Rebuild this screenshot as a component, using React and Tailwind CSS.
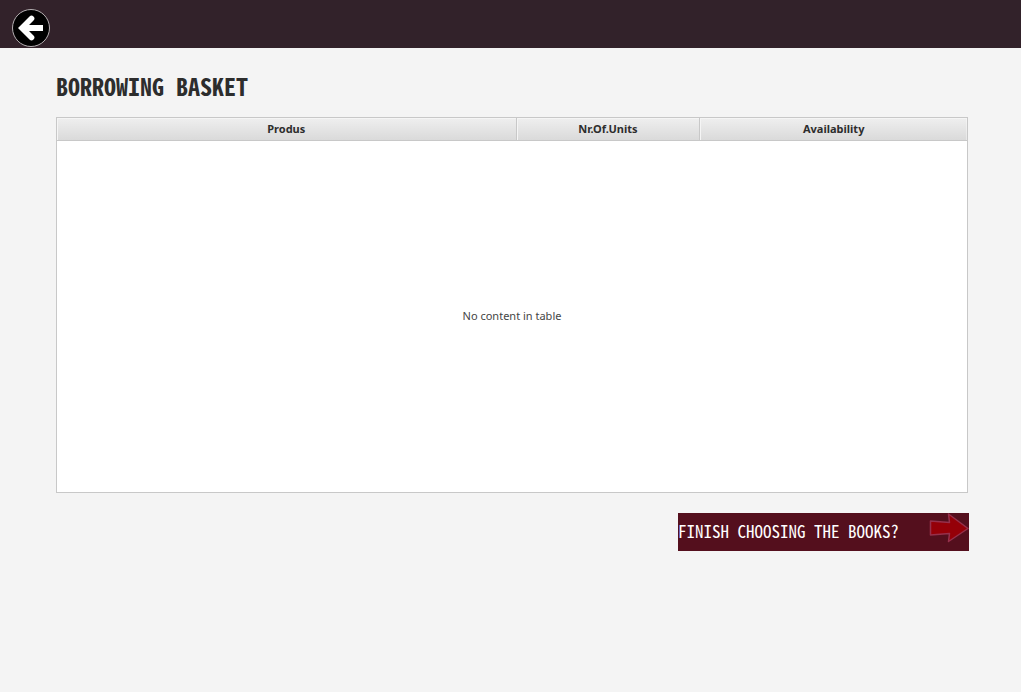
function BackIcon() {
  return (
    <svg viewBox="0 0 38 38" className="size-full" aria-hidden="true">
      <circle cx="19" cy="19" r="18.5" fill="#000" stroke="#b5b0b2" strokeWidth="1" />
      <path
        d="M6 19L17.500 7.500Q19.500 5.500 21.500 7.500Q23.500 9.500 21.500 11.500L17 16H31V22H17L21.500 26.500Q23.500 28.500 21.500 30.500Q19.500 32.500 17.500 30.500Z"
        fill="#fff"
      />
    </svg>
  );
}

function ArrowIcon() {
  return (
    <svg viewBox="0 0 40 30" className="h-[30px] w-10 shrink-0" aria-hidden="true">
      <path
        d="M1.500 8L20.500 9.500L19.500 1L39 15.500L19.500 28.500L20.500 20.500L1.500 22Z"
        fill="#950008"
        stroke="#96304b"
        strokeWidth="1.5"
        strokeLinejoin="round"
      />
    </svg>
  );
}

const headerCell =
  "h-[23px] border-b border-[#c8c8c8] p-0 text-center text-[11px] leading-4 font-bold shadow-[inset_1px_1px_0_#f5f5f5]";

export default function App() {
  return (
    <div className="min-h-screen bg-[#f4f4f4] font-['Noto_Sans','Open_Sans',sans-serif] text-[#2d2d2d]">
      <header className="flex h-12 items-end bg-[#32222a] pb-px pl-3">
        <button type="button" aria-label="Back" className="size-[38px] rounded-full">
          <BackIcon />
        </button>
      </header>

      <main className="flex flex-col pt-5 pr-[52px] pl-14">
        <h1 className="font-['Agency_FB','Noto_Sans_Mono_CJK_SC','Noto_Sans_CJK_SC',sans-serif] text-[24px] leading-9 font-bold whitespace-nowrap">
          BORROWING BASKET
        </h1>

        <table className="mt-[13px] mr-px h-[376px] table-fixed border-separate border-spacing-0 border border-[#c8c8c8] bg-white">
          <colgroup>
            <col className="w-[50.5%]" />
            <col className="w-[20.2%]" />
            <col />
          </colgroup>
          <thead className="bg-linear-to-b from-[#efefef] to-[#d9d9d9]">
            <tr>
              <th scope="col" className={`${headerCell} border-r`}>Produs</th>
              <th scope="col" className={`${headerCell} border-r`}>Nr.Of.Units</th>
              <th scope="col" className={headerCell}>Availability</th>
            </tr>
          </thead>
          <tbody>
            <tr>
              <td colSpan={3} className="p-0 pb-0.5 text-center align-middle text-[11px] leading-4 text-[#454545]">
                No content in table
              </td>
            </tr>
          </tbody>
        </table>

        <button
          type="button"
          className="mt-5 flex h-[38px] w-[291px] items-start justify-between self-end bg-[#540f1d] text-white"
        >
          <span className="font-['Agency_FB','Noto_Sans_Mono_CJK_SC','Noto_Sans_CJK_SC',sans-serif] text-[17px] leading-9 whitespace-nowrap">
            FINISH CHOOSING THE BOOKS?
          </span>
          <ArrowIcon />
        </button>
      </main>
    </div>
  );
}
